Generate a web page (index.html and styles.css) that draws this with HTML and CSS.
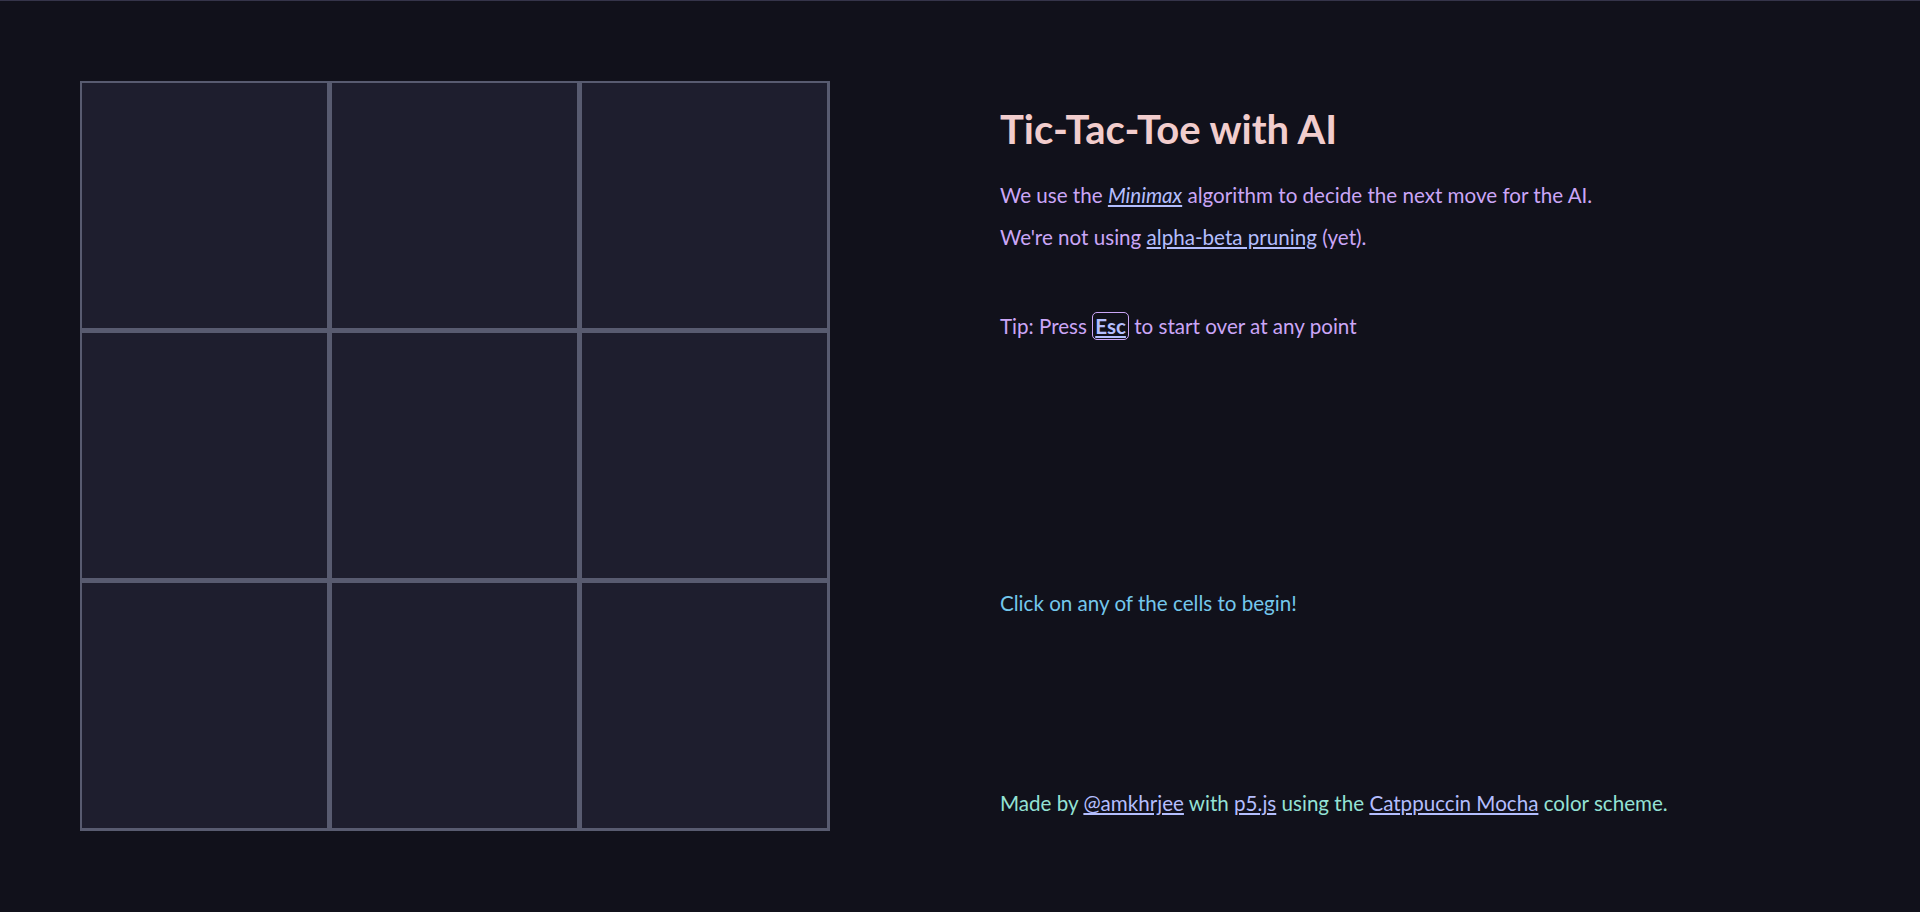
FILE: index.html
```html
<!DOCTYPE html>
<html lang="en">
<head>
<meta charset="utf-8">
<title>Tic-Tac-Toe with AI</title>
<link rel="stylesheet" href="styles.css">
</head>
<body>
<div class="topline"></div>
<main class="page">
  <div class="board">
    <div class="cell"></div><div class="cell"></div><div class="cell"></div>
    <div class="cell"></div><div class="cell"></div><div class="cell"></div>
    <div class="cell"></div><div class="cell"></div><div class="cell"></div>
  </div>
  <section class="info">
    <h1 class="title">Tic-Tac-Toe with AI</h1>
    <p class="text first">We use the <a class="link" href="#"><em>Minimax</em></a> algorithm to decide the next move for the AI.</p>
    <p class="text">We're not using <a class="link" href="#">alpha-beta pruning</a> (yet).</p>
    <p class="text tip">Tip: Press <kbd class="key">Esc</kbd> to start over at any point</p>
    <p class="status">Click on any of the cells to begin!</p>
    <p class="credits">Made by <a class="link" href="#">@amkhrjee</a> with <a class="link" href="#">p5.js</a> using the <a class="link" href="#">Catppuccin Mocha</a> color scheme.</p>
  </section>
</main>
</body>
</html>
```
FILE: styles.css
```css
html, body {
  margin: 0;
  padding: 0;
}
body {
  background: #11111b;
  font-family: "Lato", "Open Sans", sans-serif;
  height: 912px;
  overflow: hidden;
}
.topline {
  height: 1px;
  background: #35344a;
}
.page {
  display: flex;
  padding: 80px 0 0 80px;
  gap: 170px;
}
.board {
  width: 750px;
  height: 750px;
  box-sizing: border-box;
  background: #585b70;
  padding: 2px 3px 3px 2px;
  display: grid;
  grid-template-columns: repeat(3, 245px);
  grid-template-rows: repeat(3, 245px);
  gap: 5px;
  flex-shrink: 0;
}
.cell {
  background: #1e1e2e;
}
.info {
  display: flex;
  flex-direction: column;
}
.title {
  margin: 24px 0 0;
  font-size: 40px;
  line-height: 48px;
  font-weight: 700;
  color: #f2cdcd;
}
.text {
  margin: 14px 0 0;
  font-size: 20.6px;
  line-height: 28px;
  color: #cba6f7;
}
.text.first {
  margin-top: 28px;
}
.text.tip {
  margin-top: 61px;
}
.link {
  color: #b4befe;
  text-decoration: underline;
}
.key {
  font-family: inherit;
  font-weight: 700;
  color: #b4befe;
  text-decoration: underline;
  border: 1px solid #cba6f7;
  border-radius: 5px;
  padding: 1px 2px;
}
.status {
  margin: 249px 0 0;
  font-size: 20.6px;
  line-height: 28px;
  color: #74c7ec;
}
.credits {
  margin: 172px 0 0;
  font-size: 20.6px;
  line-height: 28px;
  color: #94e2d5;
}
```
